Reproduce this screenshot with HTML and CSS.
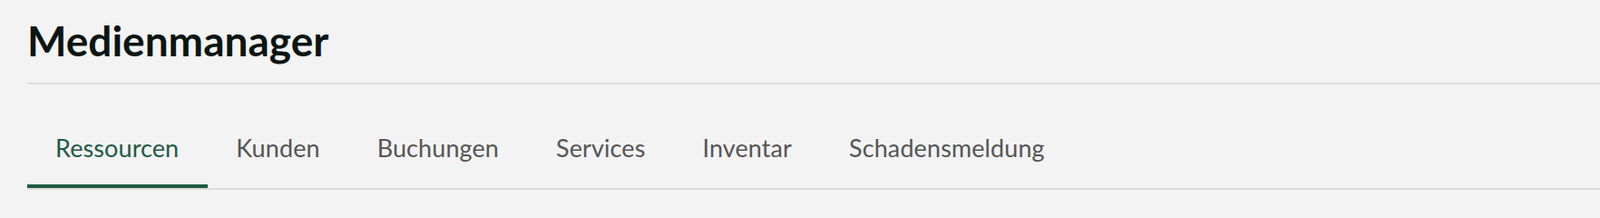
FILE: index.html
```html
<!DOCTYPE html>
<html lang="de">
<head>
<meta charset="utf-8">
<title>Medienmanager</title>
<link rel="stylesheet" href="styles.css">
</head>
<body>
<div class="page">
  <header class="page-header">
    <h1 class="title">Medienmanager</h1>
  </header>
  <nav class="tabs">
    <a class="tab tab-active" href="#">Ressourcen</a>
    <a class="tab" href="#">Kunden</a>
    <a class="tab" href="#">Buchungen</a>
    <a class="tab" href="#">Services</a>
    <a class="tab" href="#">Inventar</a>
    <a class="tab" href="#">Schadensmeldung</a>
  </nav>
</div>
</body>
</html>
```
FILE: styles.css
```css
html, body {
  margin: 0;
  padding: 0;
  background: #f3f3f3;
}
body {
  font-family: "Lato", "Open Sans", sans-serif;
}
.page {
  padding-left: 30px;
}
.page-header {
  border-bottom: 2px solid #dcdcdc;
  padding-top: 22px;
  padding-bottom: 23px;
}
.title {
  margin: 0;
  font-size: 46px;
  line-height: 46px;
  font-weight: 700;
  color: #0c1512;
}
.tabs {
  display: flex;
  border-bottom: 2px solid #dcdcdc;
}
.tab {
  display: block;
  padding: 56px 32px 27px 31px;
  font-size: 27px;
  line-height: 27px;
  letter-spacing: 0.1px;
  color: #555555;
  text-decoration: none;
  border-bottom: 4px solid transparent;
}
.tab-active {
  color: #1f5a43;
  border-bottom-color: #1f5a43;
}
```
